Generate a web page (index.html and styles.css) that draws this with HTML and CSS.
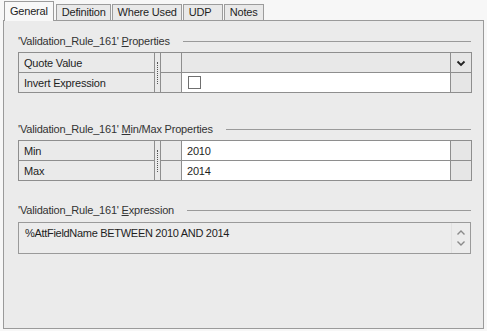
FILE: index.html
```html
<!DOCTYPE html>
<html lang="en">

<head>
    <meta charset="utf-8">
    <meta name="viewport" content="width=device-width, initial-scale=1.0">
    <title>Validation Rule</title>
    <link rel="stylesheet" href="styles.css">
</head>

<body>

    <nav class="tabs">
        <span class="tab active">General</span>
        <span class="tab">Definition</span>
        <span class="tab">Where Used</span>
        <span class="tab">UDP</span>
        <span class="tab">Notes</span>
    </nav>

    <main class="panel">

        <section class="group">
            <h2 class="title"><span>'Validation_Rule_161' <u>P</u>roperties</span></h2>
            <table class="grid">
                <colgroup>
                    <col class="c-label"><col class="c-split"><col class="c-small"><col class="c-value"><col class="c-btn">
                </colgroup>
                <tr>
                    <td class="label">Quote Value</td>
                    <td class="split" rowspan="2"><i></i></td>
                    <td class="small"></td>
                    <td class="value combo"></td>
                    <td class="btn"><svg width="10" height="7" viewBox="0 0 10 7"><path d="M1.5 1.5 L5 5 L8.5 1.5" fill="none" stroke="#222" stroke-width="1.8"/></svg></td>
                </tr>
                <tr>
                    <td class="label">Invert Expression</td>
                    <td class="small"></td>
                    <td class="value"><span class="check"></span></td>
                    <td class="btn"></td>
                </tr>
            </table>
        </section>

        <section class="group minmax">
            <h2 class="title"><span>'Validation_Rule_161' <u>M</u>in/Max Properties</span></h2>
            <table class="grid">
                <colgroup>
                    <col class="c-label"><col class="c-split"><col class="c-small"><col class="c-value"><col class="c-btn">
                </colgroup>
                <tr>
                    <td class="label">Min</td>
                    <td class="split" rowspan="2"><i></i></td>
                    <td class="small"></td>
                    <td class="value">2010</td>
                    <td class="btn"></td>
                </tr>
                <tr>
                    <td class="label">Max</td>
                    <td class="small"></td>
                    <td class="value">2014</td>
                    <td class="btn"></td>
                </tr>
            </table>
        </section>

        <section class="group">
            <h2 class="title"><span>'Validation_Rule_161' <u>E</u>xpression</span></h2>
            <div class="expr">
                <p>%AttFieldName BETWEEN 2010 AND 2014</p>
                <div class="scroll">
                    <svg width="10" height="7" viewBox="0 0 10 7"><path d="M1.5 5.5 L5 2 L8.5 5.5" fill="none" stroke="#8a8a8a" stroke-width="1.4"/></svg>
                    <svg width="10" height="7" viewBox="0 0 10 7"><path d="M1.5 1.5 L5 5 L8.5 1.5" fill="none" stroke="#8a8a8a" stroke-width="1.4"/></svg>
                </div>
            </div>
        </section>

    </main>

</body>

</html>
```

FILE: styles.css
```css
body {
    margin: 0;
    padding: 0 0 0 3px;
    background-color: #f7f7f7;
    font-family: "Liberation Sans", Arial, sans-serif;
    font-size: 11px;
    letter-spacing: -0.2px;
    color: #1e1e1e;
}

.tabs {
    display: flex;
    align-items: flex-end;
    height: 20px;
    padding-left: 1px;
}

.tab {
    box-sizing: border-box;
    min-width: 40px;
    height: 16px;
    line-height: 14px;
    padding: 0 4px 0 5px;
    border: 1px solid #9c9c9c;
    border-bottom: none;
    background-color: #e9e9e9;
    margin-right: 1px;
}

.tab.active {
    height: 20px;
    line-height: 18px;
    margin-bottom: -1px;
    margin-right: 2px;
    position: relative;
    background-color: #f8f8f8;
    padding: 0 5px;
}

.panel {
    box-sizing: border-box;
    width: 481px;
    height: 309px;
    border: 1px solid #9a9a9a;
    background-color: #ebebeb;
    padding: 13px 12px 0 14px;
}

.group {
    margin-bottom: 29px;
}

.group.minmax {
    margin-bottom: 22px;
}

.title {
    display: flex;
    align-items: center;
    margin: 0;
    font-size: 11px;
    font-weight: normal;
    line-height: 14px;
    color: #333;
}

.title::after {
    content: "";
    flex: 1;
    border-top: 1px solid #9a9a9a;
    margin-left: 13px;
}

.grid {
    width: 453px;
    margin-top: 4px;
    border-collapse: collapse;
    table-layout: fixed;
}

.c-label { width: 136px; }
.c-split { width: 6px; }
.c-small { width: 21px; }
.c-value { width: 269px; }
.c-btn { width: 21px; }

.grid td {
    height: 19px;
    padding: 0;
    border: 1px solid #8e8e8e;
    background-color: #eaeaea;
    vertical-align: middle;
}

.grid .label {
    padding-left: 5px;
}

.grid .value {
    padding-left: 5px;
    background-color: #fff;
}

.grid .value.combo {
    background-color: #e8e8e8;
}

.grid .btn {
    text-align: center;
    background-color: #e6e6e6;
}

.grid .split {
    text-align: center;
}

.split i {
    display: inline-block;
    width: 0;
    height: 22px;
    border-left: 1px dotted #555;
    vertical-align: middle;
}

.check {
    display: inline-block;
    width: 11px;
    height: 11px;
    border: 1px solid #6f6f6f;
    background-color: #fff;
    vertical-align: middle;
    margin-left: 1px;
}

.expr {
    box-sizing: border-box;
    display: flex;
    width: 453px;
    height: 32px;
    margin-top: 5px;
    border: 1px solid #9a9a9a;
    background-color: #ececec;
}

.expr p {
    flex: 1;
    margin: 0;
    padding: 4px 0 0 6px;
    letter-spacing: -0.3px;
}

.scroll {
    width: 18px;
    display: flex;
    flex-direction: column;
    align-items: center;
    justify-content: center;
    gap: 4px;
    border-left: 1px solid #e2e2e2;
}

.scroll svg {
    display: block;
}
```
